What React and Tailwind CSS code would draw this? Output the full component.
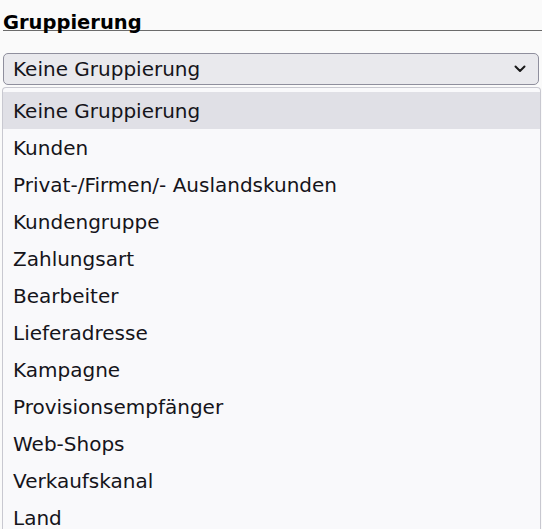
import React from 'react';

const options = [
  'Keine Gruppierung',
  'Kunden',
  'Privat-/Firmen/- Auslandskunden',
  'Kundengruppe',
  'Zahlungsart',
  'Bearbeiter',
  'Lieferadresse',
  'Kampagne',
  'Provisionsempfänger',
  'Web-Shops',
  'Verkaufskanal',
  'Land',
];

const ChevronDown = () => (
  <svg width="14" height="14" viewBox="0 0 14 14" fill="none">
    <path d="M2.5 4.5 L7 9 L11.5 4.5" stroke="#1a1a1a" strokeWidth="2" strokeLinecap="round" strokeLinejoin="round" />
  </svg>
);

const App = () => {
  return (
    <div
      className="w-[542px] h-[529px] overflow-hidden bg-[#fafafa] text-[#15141a]"
      style={{ fontFamily: '"DejaVu Sans", Verdana, sans-serif' }}
    >
      {/* Heading */}
      <div className="pt-[12px] pl-[3px]">
        <h3 className="h-[19px] border-b border-[#6b6b6b] text-[19.5px] font-bold leading-[22px] text-black">
          Gruppierung
        </h3>
      </div>

      {/* Select */}
      <div className="px-[3px] pt-[22px]">
        <div className="flex h-[32px] items-center justify-between rounded-[5px] border border-[#8f8f9d] bg-[#e9e9ed] pl-[9px] pr-[11px] text-[20px]">
          <span>Keine Gruppierung</span>
          <ChevronDown />
        </div>
      </div>

      {/* Options list */}
      <div className="ml-[2px] mr-[1px] mt-[2px] rounded-t-[4px] border-l border-r border-t border-[#c8c8d0] bg-[#f9f9fb] pt-[4px]">
        {options.map((opt, i) => (
          <div
            key={opt}
            className={`flex h-[37px] items-center pl-[10px] text-[20px] ${i === 0 ? 'bg-[#e0e0e6]' : ''}`}
          >
            {opt}
          </div>
        ))}
      </div>
    </div>
  );
};

export default App;
